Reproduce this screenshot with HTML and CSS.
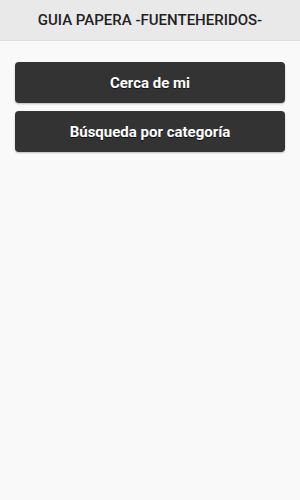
FILE: index.html
```html
<!doctype html>
<html lang="es">
<head>
  <meta charset="UTF-8">
  <meta name="viewport" content="width=device-width, initial-scale=1.0">
  <title>Guia Papera</title>
  <link rel="stylesheet" href="styles.css">
</head>
<body>
  <div class="header">
    GUIA PAPERA -FUENTEHERIDOS-
  </div>
  <div class="content">
    <div class="btn">Cerca de mi</div>
    <div class="btn">Búsqueda por categoría</div>
  </div>
</body>
</html>
```

FILE: styles.css
```css
body {
    margin: 0;
    background: #f9f9f9;
    font-family: Roboto, "Liberation Sans", sans-serif;
}

.header {
    height: 40px;
    display: flex;
    align-items: center;
    justify-content: center;
    background: #e9e9e9;
    border-bottom: 1px solid #dddddd;
    color: #222;
    font-size: 15px;
    font-weight: 500;
}

.content {
    display: flex;
    flex-direction: column;
    gap: 8px;
    padding: 21px 15px;
}

.btn {
    height: 41px;
    display: flex;
    align-items: center;
    justify-content: center;
    background: #333;
    border-radius: 4px;
    box-shadow: 0 1px 2px rgba(0, 0, 0, 0.25);
    color: #fff;
    font-size: 15px;
    font-weight: 700;
    text-shadow: 0 1px 0 #111;
    cursor: pointer;
}
```
